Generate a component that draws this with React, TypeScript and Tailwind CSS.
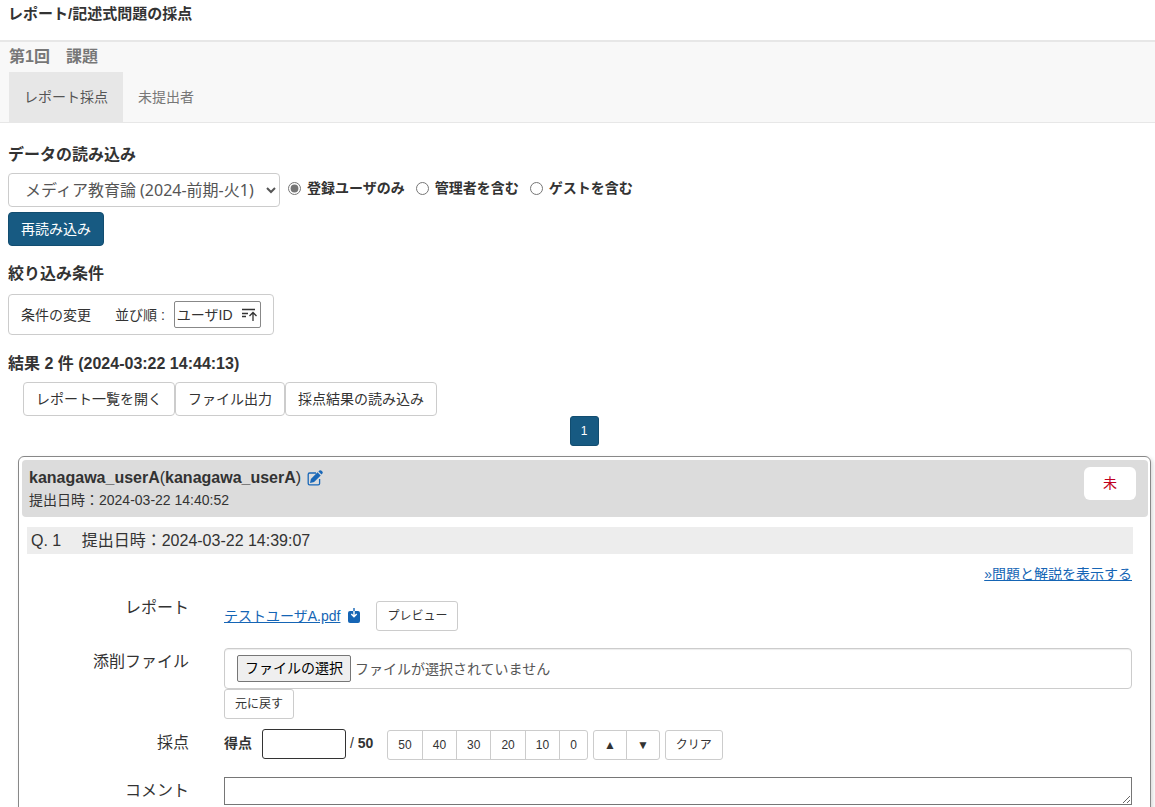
import { useState } from "react";
import type { ReactNode } from "react";

const userScopes = ["登録ユーザのみ", "管理者を含む", "ゲストを含む"];
const actions = ["レポート一覧を開く", "ファイル出力", "採点結果の読み込み"];
const quickScores = ["50", "40", "30", "20", "10", "0"];

const btn = "h-[34px] px-3 rounded border text-sm leading-5 whitespace-nowrap";
const btnSmall = "h-[30px] px-2.5 border border-[#ccc] bg-white text-xs leading-[18px] whitespace-nowrap";

function SortIcon() {
    return (
        <svg className="w-4 h-4" viewBox="0 0 16 16" fill="none" stroke="#333" strokeWidth="1.3" aria-hidden="true">
            <path d="M1 2.500h13M1 6.500h6M1 9.500h4" />
            <path d="M12 14V5.500M8.500 9L12 5.500l3.500 3.500" />
        </svg>
    );
}

function EditIcon() {
    return (
        <svg className="w-4 h-4" viewBox="0 0 16 16" aria-hidden="true">
            <path d="M9 3H2.600Q1.200 3 1.200 4.400V13.400Q1.200 14.800 2.600 14.800H11.200Q12.600 14.800 12.600 13.400V9" fill="none" stroke="#1a68b8" strokeWidth="1.3" />
            <path d="M3 13L3.900 8.900L10.500 2.300L13.700 5.500L7.100 12.100ZM11.400 1.500L12.400 0.600Q13.500 -0.200 14.600 0.700L15.300 1.400Q16.200 2.500 15.400 3.600L14.500 4.600Z" fill="#1a68b8" />
        </svg>
    );
}

function DownloadIcon() {
    return (
        <svg className="w-3 h-4" viewBox="0 0 12 16" fill="none" aria-hidden="true">
            <rect x="0" y="3" width="12" height="12" rx="2" fill="#1565b5" />
            <path d="M6 0v3" stroke="#1565b5" strokeWidth="1.4" />
            <path d="M6 3v5M3.300 6L6 8.700L8.700 6" stroke="#fff" strokeWidth="1.4" />
        </svg>
    );
}

function Row({ label, htmlFor, children }: { label: string; htmlFor?: string; children: ReactNode }) {
    return (
        <div className="grid grid-cols-[162px_minmax(0,1fr)] gap-x-[35px] pr-px">
            <label htmlFor={htmlFor} className="pt-0.5 text-right text-base leading-6">
                {label}
            </label>
            <div>{children}</div>
        </div>
    );
}

export default function App() {
    const [scope, setScope] = useState(userScopes[0]);
    const [score, setScore] = useState("");

    const step = (diff: number) => setScore(String(Math.min(50, Math.max(0, Number(score) + diff))));

    return (
        <div className="bg-white text-sm leading-5 text-[#333] font-['Liberation_Sans','Noto_Sans_CJK_JP',sans-serif]">
            <header className="h-10 px-2 pt-1">
                <h1 className="text-[15px] leading-5 font-bold">レポート/記述式問題の採点</h1>
            </header>

            {/* Assignment title and tabs */}
            <nav className="border-t-2 border-b border-t-[#e7e7e7] border-b-[#e7e7e7] bg-[#f8f8f8] px-[9px] pt-1 text-[#777]">
                <h2 className="h-[26px] text-base leading-[22px] font-bold">第1回　課題</h2>
                <div className="flex">
                    <a href="#grading" className="px-[15px] py-[15px] bg-[#e7e7e7] text-[#555]">レポート採点</a>
                    <a href="#missing" className="px-[15px] py-[15px]">未提出者</a>
                </div>
            </nav>

            <main className="px-2 pt-5">
                {/* Data source */}
                <h3 className="text-base leading-6 font-bold">データの読み込み</h3>
                <div className="mt-1.5 flex flex-wrap items-start gap-x-2">
                    <select
                        aria-label="科目"
                        className="w-[272px] h-[34px] pl-3 rounded border border-[#ccc] bg-white text-base text-[#555] font-['Noto_Sans','Noto_Sans_CJK_JP',sans-serif]"
                    >
                        <option>メディア教育論 (2024-前期-火1)</option>
                    </select>
                    <div className="flex gap-[11px] pt-[5px]">
                        {userScopes.map((name) => (
                            <label key={name} className="flex items-center gap-1.5 font-bold">
                                <input
                                    type="radio"
                                    name="scope"
                                    className="w-[13px] h-[13px] accent-[#767676]"
                                    checked={scope === name}
                                    onChange={() => setScope(name)}
                                />
                                {name}
                            </label>
                        ))}
                    </div>
                </div>
                <button className={`${btn} mt-[5px] border-[#124d70] bg-[#175a82] text-white`}>再読み込み</button>

                {/* Filter */}
                <h3 className="mt-4 text-base leading-6 font-bold">絞り込み条件</h3>
                <button className="mt-2 flex items-center h-[41px] px-3 rounded border border-[#ccc] bg-white">
                    <span>条件の変更</span>
                    <span className="ml-6">並び順 :</span>
                    <span className="ml-[9px] flex items-center gap-2 h-[27px] pl-0.5 pr-[3px] rounded-xs border border-[#888]">
                        ユーザID
                        <SortIcon />
                    </span>
                </button>

                {/* Results */}
                <h3 className="mt-[17px] text-base leading-6 font-bold">結果 2 件 (2024-03:22 14:44:13)</h3>
                <div className="mt-1.5 ml-[15px] flex">
                    {actions.map((name) => (
                        <button key={name} className={`${btn} border-[#ccc] bg-white`}>{name}</button>
                    ))}
                </div>
                <div className="flex justify-center pl-[13px]">
                    <button className="w-[29px] h-[30px] rounded-[3px] border border-[#124d70] bg-[#175a82] text-xs text-white">1</button>
                </div>

                <section className="mt-2.5 ml-2.5 -mr-1 rounded-md border border-[#888] p-[3px] pr-0.5 pb-6 shadow-[2px_2px_4px_rgba(0,0,0,0.15)]">
                    <div className="flex items-start justify-between h-[57px] rounded bg-[#dcdcdc] pl-[7px] pr-3 pt-[7px]">
                        <div>
                            <div className="flex items-center gap-1.5 text-base leading-[22px]">
                                <span><b>kanagawa_userA</b>(<b>kanagawa_userA</b>)</span>
                                <a href="#edit" aria-label="編集"><EditIcon /></a>
                            </div>
                            <p className="leading-[22px]">提出日時：2024-03-22 14:40:52</p>
                        </div>
                        <span className="w-[52px] rounded-md bg-white pt-1.5 pb-[7px] text-center text-[#c00020]">未</span>
                    </div>

                    <div className="mt-2.5 ml-[5px] mr-[15px]">
                        <h4 className="bg-[#ededed] px-1 text-base leading-[27px]">Q. 1 　提出日時：2024-03-22 14:39:07</h4>
                        <p className="mt-2.5 pr-px text-right">
                            <a href="#question" className="text-[#1565b5] underline">»問題と解説を表示する</a>
                        </p>

                        <div className="mt-2.5">
                            <Row label="レポート">
                                <div className="flex items-center pt-[7px]">
                                    <a href="#file" className="text-[#1565b5] underline">テストユーザA.pdf</a>
                                    <a href="#download" aria-label="ダウンロード" className="ml-2"><DownloadIcon /></a>
                                    <button className={`${btnSmall} ml-4 rounded-[3px]`}>プレビュー</button>
                                </div>
                            </Row>
                        </div>

                        <div className="mt-[17px]">
                            <Row label="添削ファイル" htmlFor="correction">
                                <label className="relative flex items-center h-[41px] px-3 rounded border border-[#ccc] text-[#555] shadow-[inset_0_1px_1px_rgba(0,0,0,0.075)]">
                                    <input id="correction" type="file" className="sr-only" />
                                    <span className="mr-1 px-[7px] py-[3px] rounded-xs border border-[#767676] bg-[#efefef] text-black leading-[19px]">ファイルの選択</span>
                                    ファイルが選択されていません
                                </label>
                                <button className={`${btnSmall} rounded-[3px] block`}>元に戻す</button>
                            </Row>
                        </div>

                        <div className="mt-2.5">
                            <Row label="採点" htmlFor="score">
                                <div className="flex flex-wrap items-start">
                                    <span className="font-bold leading-7">得点</span>
                                    <input
                                        id="score"
                                        type="text"
                                        value={score}
                                        onChange={(e) => setScore(e.target.value)}
                                        className="ml-2.5 w-[84px] h-[30px] px-2 rounded-[3px] border border-[#333]"
                                    />
                                    <span className="ml-1 leading-7">/ <b>50</b></span>
                                    <div className="ml-3.5 mt-px flex">
                                        {quickScores.map((value) => (
                                            <button
                                                key={value}
                                                onClick={() => setScore(value)}
                                                className={`${btnSmall} -ml-px first:ml-0 first:rounded-l-[3px] last:rounded-r-[3px]`}
                                            >
                                                {value}
                                            </button>
                                        ))}
                                    </div>
                                    <div className="ml-[5px] mt-px flex">
                                        <button aria-label="点数を上げる" onClick={() => step(1)} className={`${btnSmall} w-[34px] rounded-l-[3px]`}>▲</button>
                                        <button aria-label="点数を下げる" onClick={() => step(-1)} className={`${btnSmall} w-[34px] -ml-px rounded-r-[3px]`}>▼</button>
                                    </div>
                                    <button onClick={() => setScore("")} className={`${btnSmall} ml-[5px] mt-px rounded-[3px]`}>クリア</button>
                                </div>
                            </Row>
                        </div>

                        <div className="mt-[17px]">
                            <Row label="コメント" htmlFor="comment">
                                <textarea id="comment" rows={1} className="block w-full h-7 px-1 border border-[#767676]" />
                            </Row>
                        </div>
                    </div>
                </section>
            </main>
        </div>
    );
}
